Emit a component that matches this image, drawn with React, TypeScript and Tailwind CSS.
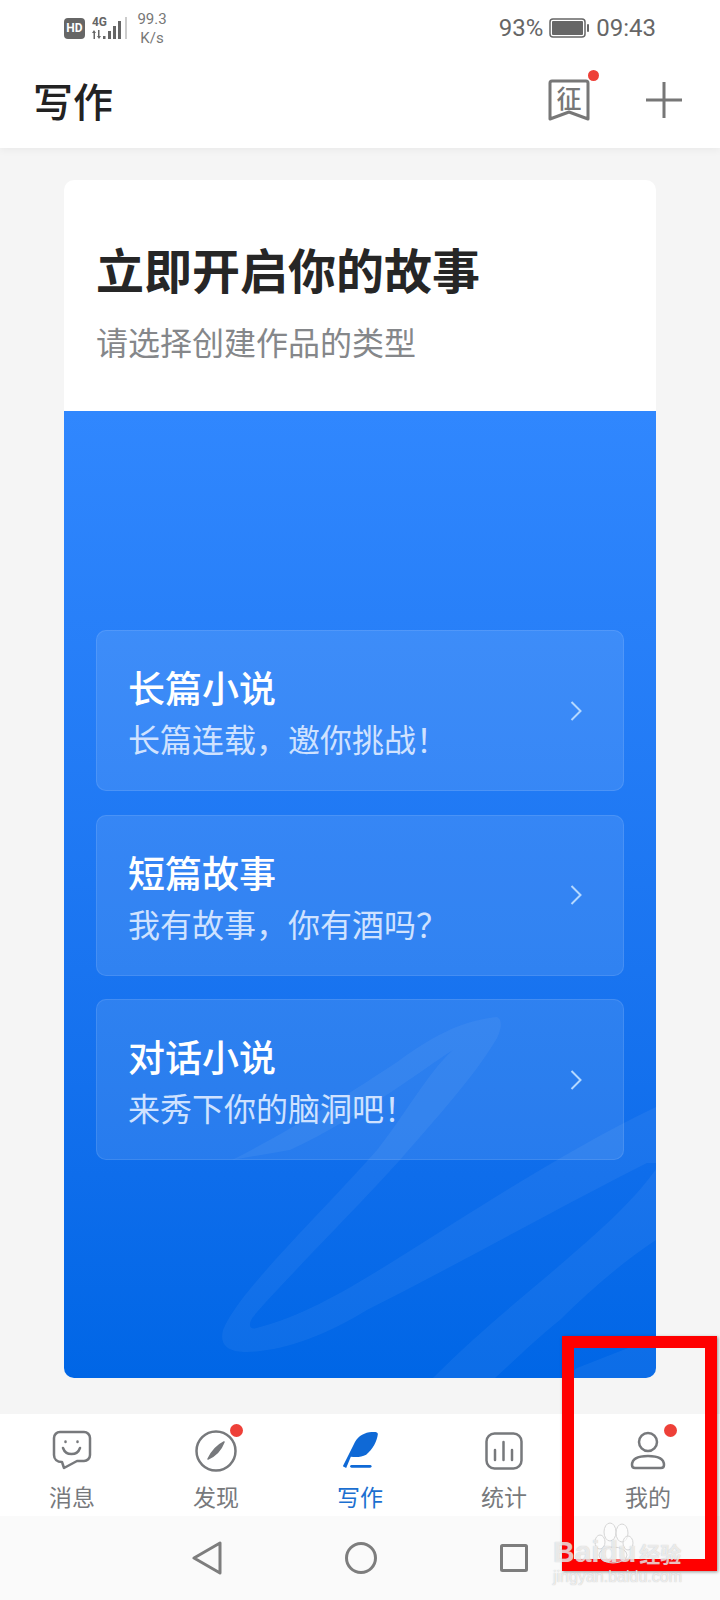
import { ReactNode } from 'react';

const cjk = "font-['Noto_Sans_CJK_SC','Noto_Sans',sans-serif]";

const rows = [
  { title: '长篇小说', sub: '长篇连载，邀你挑战！' },
  { title: '短篇故事', sub: '我有故事，你有酒吗？' },
  { title: '对话小说', sub: '来秀下你的脑洞吧！' },
];

function NavItem({ label, icon, active, dot }: { label: string; icon: ReactNode; active?: boolean; dot?: string }) {
  return (
    <div className="relative flex-1 flex flex-col items-center">
      <div className="h-[46px] flex items-center justify-center">{icon}</div>
      <span className={`mt-[9px] text-[23px] leading-[26px] ${active ? 'text-[#1b6fd0]' : 'text-[#77797c]'}`}>{label}</span>
      {dot && <span className={`absolute w-[13px] h-[13px] rounded-full bg-[#ee4038] ${dot}`} />}
    </div>
  );
}

function StatusBar() {
  return (
    <div className="h-[52px] pt-[4px] flex items-center pl-[64px] pr-[64px] font-['Roboto',sans-serif] text-[#666]">
      <span className="w-[21px] h-[21px] rounded-[4px] bg-[#666] text-white text-[12px] leading-[21px] font-bold text-center">HD</span>
      <svg className="ml-[7px]" width="37" height="24" viewBox="0 0 37 24" fill="#666">
        <text x="0" y="10" fontSize="12" fontWeight="700" fontFamily="Roboto" textLength="15" lengthAdjust="spacingAndGlyphs">4G</text>
        <path d="M2 14 L4 17 H3 V23 H1.5 V17 H0 Z M7 23 L5 20 H6 V14 H7.5 V20 H9 Z" />
        <rect x="11" y="20" width="2.5" height="3" />
        <rect x="16" y="15" width="3" height="8" />
        <rect x="21" y="10" width="3" height="13" />
        <rect x="26" y="5" width="3" height="18" />
        <rect x="33" y="1" width="2" height="22" fill="#ccc" />
      </svg>
      <div className="ml-[7px] w-[32px] text-center text-[15px] leading-[19px] text-[#777] mt-[1px]">
        <div>99.3</div>
        <div>K/s</div>
      </div>
      <div className="ml-auto flex items-center text-[24px]">
        <span>93%</span>
        <svg className="ml-[6px]" width="40" height="20" viewBox="0 0 40 20">
          <rect x="1" y="1" width="35" height="18" rx="3" fill="none" stroke="#666" strokeWidth="1.5" />
          <rect x="3" y="3" width="31" height="14" rx="1" fill="#666" />
          <rect x="38" y="6" width="2" height="8" rx="1" fill="#666" />
        </svg>
        <span className="ml-[7px]">09:43</span>
      </div>
    </div>
  );
}

function Swoosh() {
  return (
    <svg className="absolute inset-0 w-full h-full" viewBox="0 0 592 967" preserveAspectRatio="none" fill="#ffffff" fillOpacity="0.05">
      <path d="M432 606 C440 607 437 622 430 632 C410 665 372 708 336 749 C290 800 210 880 189 906 C183 915 186 920 196 916 C240 905 290 875 336 846 C410 800 500 740 592 696 L592 752 L583 752 C496 796 400 850 303 899 C260 925 220 940 183 941 C165 941 155 935 159 919 C175 880 250 810 313 739 C340 705 365 660 389 639 C370 650 300 705 226 739 L168 749 C225 720 290 680 336 649 C365 628 395 610 432 606 Z" />
      <path d="M369 967 C410 925 460 885 496 854 C530 825 570 790 592 758 L592 829 C560 850 525 880 496 909 C470 930 450 950 431 967 Z" />
      <path d="M500 967 L513 957 L592 926 L592 967 Z" />
    </svg>
  );
}

function Row({ title, sub }: { title: string; sub: string }) {
  return (
    <div className="h-[161px] flex items-center rounded-[10px] border border-white/10 bg-white/10 pl-[31px] pr-[41px]">
      <div className="flex-1 pt-[4px]">
        <div className="text-[37px] leading-[44px] font-medium text-white">{title}</div>
        <div className="text-[32px] leading-[44px] mt-[7px] text-[#cfe2ff]">{sub}</div>
      </div>
      <svg width="12" height="20" viewBox="0 0 12 20" fill="none" stroke="#b4d8ff" strokeWidth="2">
        <path d="M1.5 1 L10.5 10 L1.5 19" />
      </svg>
    </div>
  );
}

export default function App() {
  return (
    <div className={`relative w-[720px] h-[1600px] overflow-hidden bg-[#f5f5f5] flex flex-col ${cjk}`}>
      <div className="h-[148px] bg-white shadow-[0_2px_8px_rgba(0,0,0,0.05)]">
        <StatusBar />
        <div className="h-[96px] flex items-center pl-[33px] pr-[38px]">
          <h1 className="text-[40px] font-medium text-[#222] leading-none">写作</h1>
          <div className="relative ml-auto">
            <svg width="42" height="42" viewBox="0 0 42 42" fill="none" stroke="#777" strokeWidth="3" strokeLinejoin="round">
              <path d="M4 2 H38 Q40 2 40 4 V40 L21 33 L2 40 V4 Q2 2 4 2 Z" />
            </svg>
            <span className="absolute left-0 top-[3px] w-[42px] text-center text-[25px] leading-[30px] font-medium text-[#777]">征</span>
            <span className="absolute left-[40px] top-[-9px] w-[11px] h-[11px] rounded-full bg-[#ee4038]" />
          </div>
          <svg className="ml-[56px]" width="36" height="36" viewBox="0 0 36 36" stroke="#777" strokeWidth="3">
            <path d="M18 0 V36 M0 18 H36" />
          </svg>
        </div>
      </div>

      <div className="flex-1 px-[64px] pt-[32px] pb-[36px] flex">
        <div className="flex-1 rounded-[10px] overflow-hidden flex flex-col">
          <div className="h-[231px] bg-white pl-[32px] pt-[56px]">
            <h2 className="text-[48px] leading-[64px] font-bold text-[#262626]">立即开启你的故事</h2>
            <p className="mt-[18px] text-[32px] leading-[46px] text-[#85878a]">请选择创建作品的类型</p>
          </div>
          <div className="relative flex-1 bg-gradient-to-b from-[#3087fe] to-[#0066e6] px-[32px] pt-[219px] flex flex-col gap-[23.5px]">
            <Swoosh />
            {rows.map((r) => (
              <div key={r.title} className="relative">
                <Row title={r.title} sub={r.sub} />
              </div>
            ))}
          </div>
        </div>
      </div>

      <div className="h-[102px] bg-white flex pt-[14px]">
        <NavItem
          label="消息"
          icon={
            <svg width="40" height="42" viewBox="0 0 40 42" fill="none" stroke="#77797c" strokeWidth="2.5" strokeLinecap="round" strokeLinejoin="round">
              <path d="M8 2 H32 A6 6 0 0 1 38 8 V25 A6 6 0 0 1 32 31 H25 L12 38 L10 32 C5 32 2 29 2 25 V8 A6 6 0 0 1 8 2 Z" />
              <path d="M11 18 A9 9 0 0 0 28 18" />
              <path d="M13.5 11.5 V12 M25.5 11.5 V12" />
            </svg>
          }
        />
        <NavItem
          label="发现"
          dot="left-[86px] top-[-4px]"
          icon={
            <svg width="42" height="42" viewBox="0 0 42 42" fill="none" stroke="#77797c" strokeWidth="2.5">
              <circle cx="21" cy="21" r="19.5" />
              <path d="M29 12 C23 15 17 21 13 29 C20 26 26 20 29 12 Z" fill="#77797c" strokeWidth="1.5" strokeLinejoin="round" />
            </svg>
          }
        />
        <NavItem
          label="写作"
          active
          icon={
            <svg width="37" height="40" viewBox="64 34 110 120" fill="#0f69d6">
              <path d="M66 140 L98 76 C108 52 125 42 145 38 C160 36 172 36 171 44 C168 65 156 90 136 105 C122 113 105 113 90 111 L76 145 Z" />
              <rect x="88" y="136" width="64" height="8" rx="4" />
            </svg>
          }
        />
        <NavItem
          label="统计"
          icon={
            <svg width="38" height="38" viewBox="0 0 38 38" fill="none" stroke="#77797c" strokeWidth="2.5" strokeLinecap="round">
              <rect x="1.5" y="1.5" width="35" height="35" rx="8" />
              <path d="M10 18 V28 M18.5 10 V28 M27 18 V28" />
            </svg>
          }
        />
        <NavItem
          label="我的"
          dot="left-[88px] top-[-4px]"
          icon={
            <svg width="36" height="40" viewBox="0 0 36 40" fill="none" stroke="#77797c" strokeWidth="2.5" strokeLinejoin="round">
              <circle cx="18" cy="11" r="9" />
              <path d="M2 34 C2 28 8 25 18 25 C28 25 34 28 34 34 Q34 37 31 37 H5 Q2 37 2 34 Z" />
            </svg>
          }
        />
      </div>

      <div className="h-[84px] bg-[#fafafa] flex items-center justify-center gap-[123px]">
        <svg width="30" height="34" viewBox="0 0 30 34" fill="none" stroke="#7d7d7d" strokeWidth="3" strokeLinejoin="round">
          <path d="M28 2 V32 L2 17 Z" />
        </svg>
        <svg width="32" height="32" viewBox="0 0 32 32" fill="none" stroke="#7d7d7d" strokeWidth="3">
          <circle cx="16" cy="16" r="14.5" />
        </svg>
        <svg width="28" height="28" viewBox="0 0 28 28" fill="none" stroke="#7d7d7d" strokeWidth="3" strokeLinejoin="round">
          <rect x="1.5" y="1.5" width="25" height="25" rx="1" />
        </svg>
      </div>

      {/* red annotation box and watermark sit over the screenshot */}
      <div className="absolute left-[562px] top-[1336px] w-[155px] h-[235px] border-[12px] border-[#ff0000] shadow-[1px_1px_3px_rgba(0,0,0,0.4)]" />
      <div className="absolute left-[553px] top-[1515px] w-[140px] h-[72px] text-white/70 font-['Liberation_Sans',sans-serif] [text-shadow:0_0_1px_rgba(120,120,120,0.5)]">
        <svg className="absolute left-[37px] top-0" width="50" height="50" viewBox="0 0 50 50" fill="#ffffff" fillOpacity="0.45" stroke="#d6d6d6" strokeWidth="1">
          <ellipse cx="10" cy="27" rx="5" ry="7" />
          <ellipse cx="20" cy="17" rx="6" ry="9" />
          <ellipse cx="32" cy="18" rx="6" ry="9" />
          <ellipse cx="38" cy="28" rx="5" ry="7" />
          <ellipse cx="23" cy="40" rx="14" ry="8" />
        </svg>
        <div className="absolute left-0 top-[20px] flex items-baseline whitespace-nowrap">
          <span className="text-[30px] leading-[34px] font-bold">Baidu</span>
          <span className={`ml-[3px] text-[21px] leading-[34px] font-bold ${cjk}`}>经验</span>
        </div>
        <div className="absolute left-0 top-[54px] text-[16px] leading-[16px] whitespace-nowrap">jingyan.baidu.com</div>
      </div>
    </div>
  );
}
